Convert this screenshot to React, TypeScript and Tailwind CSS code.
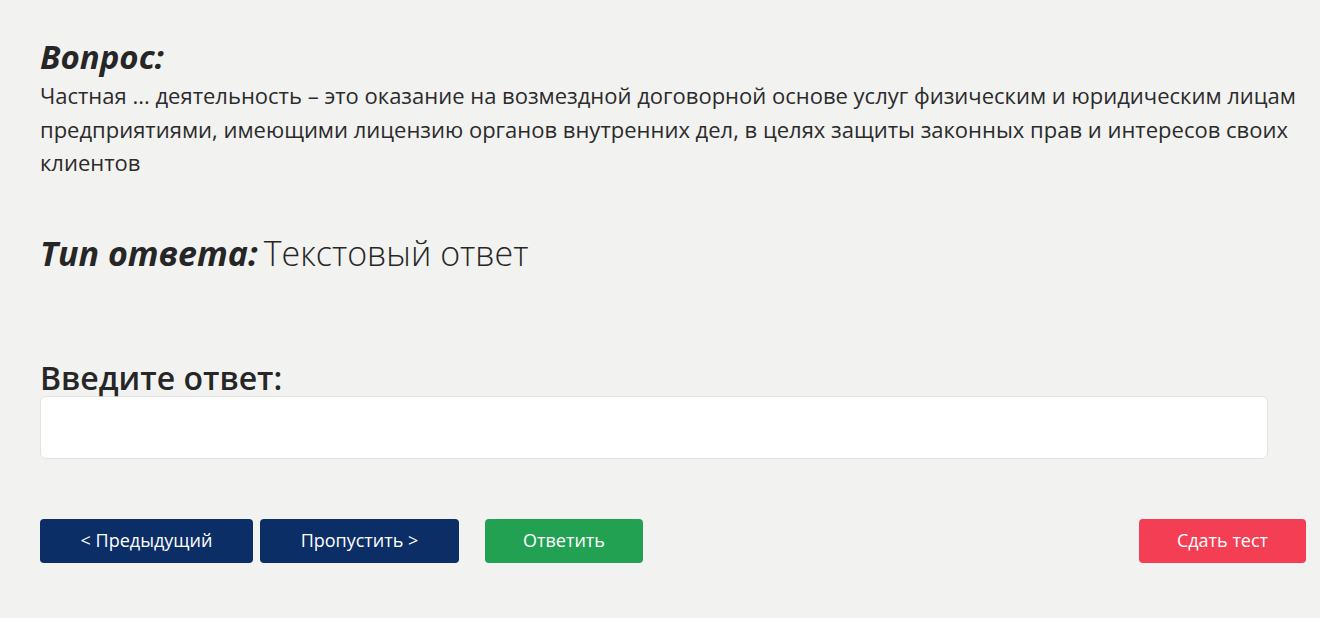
import React from "react";

export default function App() {
  return (
    <div
      className="min-h-[618px] w-full bg-[#f2f2f1] text-[#262626] pl-[40px] pr-[14px] pt-[37px]"
      style={{ fontFamily: '"Open Sans", "Noto Sans", sans-serif' }}
    >
      <h2 className="text-[33px] leading-[40px] font-bold italic">Вопрос:</h2>
      <p className="text-[22px] leading-[33.5px] text-[#2b2b2b] mt-[2px]">
        Частная ... деятельность – это оказание на возмездной договорной основе услуг физическим и юридическим лицам
        предприятиями, имеющими лицензию органов внутренних дел, в целях защиты законных прав и интересов своих
        клиентов
      </p>
      <div className="mt-[53px] flex items-baseline text-[34px] leading-[40px]">
        <span className="font-bold italic">Тип ответа:</span>
        <span className="ml-[6px] font-light">Текстовый ответ</span>
      </div>
      <div className="mt-[85px] text-[32px] leading-[40px] font-semibold">Введите ответ:</div>
      <input
        type="text"
        className="mt-[-2px] block w-[1228px] h-[63px] rounded-[6px] bg-white border border-[#e2e2e2] outline-none px-3"
      />
      <div className="mt-[60px] flex items-center text-[18px] text-white">
        <button className="w-[213px] h-[44px] rounded-[4px] bg-[#0c2e66]">&lt; Предыдущий</button>
        <button className="ml-[7px] w-[199px] h-[44px] rounded-[4px] bg-[#0c2e66]">Пропустить &gt;</button>
        <button className="ml-[26px] w-[158px] h-[44px] rounded-[4px] bg-[#23a152]">Ответить</button>
        <div className="flex-1" />
        <button className="w-[167px] h-[44px] rounded-[4px] bg-[#f43e53]">Сдать тест</button>
      </div>
    </div>
  );
}
